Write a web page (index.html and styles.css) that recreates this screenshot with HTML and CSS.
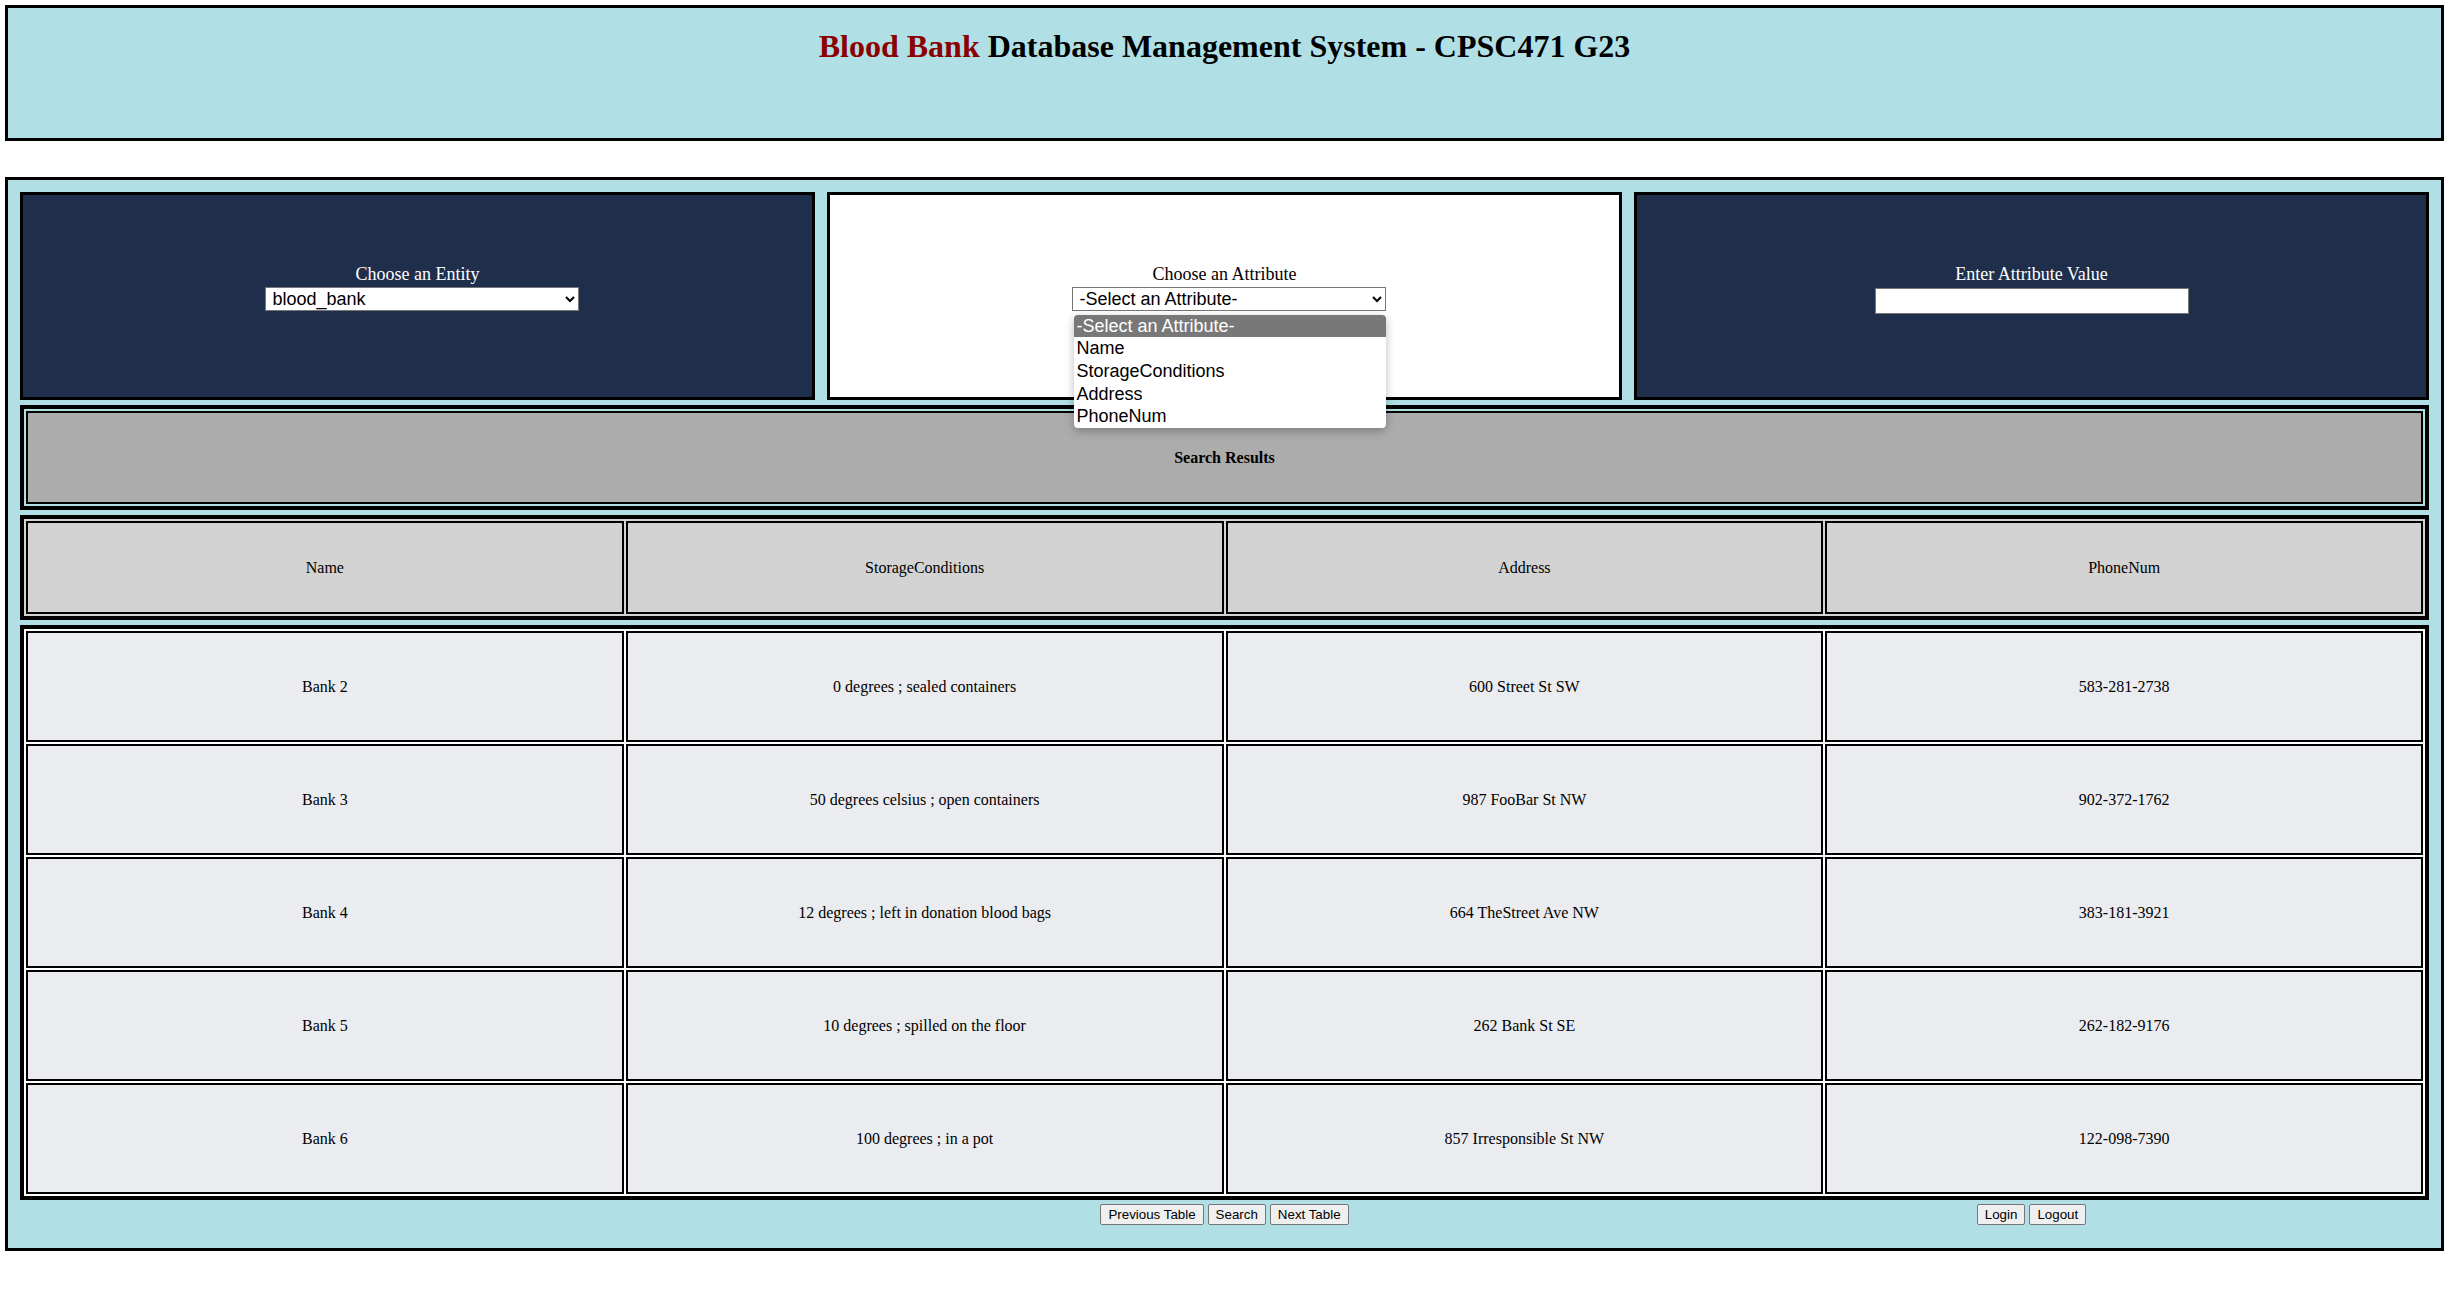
FILE: index.html
```html
<!DOCTYPE html>
<html lang="en">
<head>
<meta charset="utf-8">
<title>Blood Bank Database Management System</title>
<link rel="stylesheet" href="styles.css">
</head>
<body>
<header class="banner">
  <h1><span class="red">Blood Bank</span> Database Management System - CPSC471 G23</h1>
</header>

<main class="app">
  <div class="controls">
    <div class="panel dark">
      <label class="lbl" for="entity">Choose an Entity</label>
      <select id="entity" class="field sel"><option>blood_bank</option></select>
    </div>
    <div class="panel light">
      <label class="lbl" for="attr">Choose an Attribute</label>
      <div class="sel-wrap">
        <select id="attr" class="field sel">
          <option>-Select an Attribute-</option>
          <option>Name</option>
          <option>StorageConditions</option>
          <option>Address</option>
          <option>PhoneNum</option>
        </select>
        <ul class="dropdown">
          <li class="active">-Select an Attribute-</li>
          <li>Name</li>
          <li>StorageConditions</li>
          <li>Address</li>
          <li>PhoneNum</li>
        </ul>
      </div>
    </div>
    <div class="panel dark">
      <label class="lbl" for="val">Enter Attribute Value</label>
      <input id="val" type="text" class="field txt">
    </div>
  </div>

  <table class="tbl search">
    <tr><th><div class="c c-search">Search Results</div></th></tr>
  </table>

  <table class="tbl heads">
    <tr>
      <td><div class="c c-head">Name</div></td>
      <td><div class="c c-head">StorageConditions</div></td>
      <td><div class="c c-head">Address</div></td>
      <td><div class="c c-head">PhoneNum</div></td>
    </tr>
  </table>

  <table class="tbl rows">
    <tr>
      <td><div class="c c-row">Bank 2</div></td>
      <td><div class="c c-row">0 degrees ; sealed containers</div></td>
      <td><div class="c c-row">600 Street St SW</div></td>
      <td><div class="c c-row">583-281-2738</div></td>
    </tr>
    <tr>
      <td><div class="c c-row">Bank 3</div></td>
      <td><div class="c c-row">50 degrees celsius ; open containers</div></td>
      <td><div class="c c-row">987 FooBar St NW</div></td>
      <td><div class="c c-row">902-372-1762</div></td>
    </tr>
    <tr>
      <td><div class="c c-row">Bank 4</div></td>
      <td><div class="c c-row">12 degrees ; left in donation blood bags</div></td>
      <td><div class="c c-row">664 TheStreet Ave NW</div></td>
      <td><div class="c c-row">383-181-3921</div></td>
    </tr>
    <tr>
      <td><div class="c c-row">Bank 5</div></td>
      <td><div class="c c-row">10 degrees ; spilled on the floor</div></td>
      <td><div class="c c-row">262 Bank St SE</div></td>
      <td><div class="c c-row">262-182-9176</div></td>
    </tr>
    <tr>
      <td><div class="c c-row">Bank 6</div></td>
      <td><div class="c c-row">100 degrees ; in a pot</div></td>
      <td><div class="c c-row">857 Irresponsible St NW</div></td>
      <td><div class="c c-row">122-098-7390</div></td>
    </tr>
  </table>

  <div class="footer">
    <div></div>
    <div class="btns"><button type="button">Previous Table</button> <button type="button">Search</button> <button type="button">Next Table</button></div>
    <div class="btns"><button type="button">Login</button> <button type="button">Logout</button></div>
  </div>
</main>
</body>
</html>
```

FILE: styles.css
```css
html, body {
  background: #ffffff;
}
body {
  margin: 5px;
  font-family: "Liberation Serif", "Times New Roman", serif;
  font-size: 16px;
  color: #000;
}

.banner {
  background: #b0e0e6;
  border: 3px solid #000;
  height: 130px;
}
.banner h1 {
  margin: 19.5px 0;
  font-size: 32px;
  font-weight: bold;
  text-align: center;
  line-height: normal;
}
.red {
  color: #8b0000;
}

.app {
  display: block;
  margin-top: 36px;
  background: #b0e0e6;
  border: 3px solid #000;
  padding: 12px 12px 23px;
}

.controls {
  display: grid;
  grid-template-columns: repeat(3, 1fr);
  gap: 12px;
}
.panel {
  box-sizing: border-box;
  height: 208px;
  border: 3px solid #000;
  display: flex;
  flex-direction: column;
  align-items: center;
  justify-content: center;
  padding-bottom: 17px;
  text-align: center;
}
.panel.dark {
  background: #1e2e4b;
  color: #fff;
}
.panel.light {
  background: #fff;
  color: #000;
}
.lbl {
  display: block;
  font-size: 18px;
  line-height: 20.7px;
}
.field {
  box-sizing: border-box;
  width: 314px;
  margin-top: 2px;
  font-family: "Liberation Sans", Arial, sans-serif;
  font-size: 18px;
  color: #000;
  background: #fff;
  border: 1px solid #767676;
}
.sel {
  height: 24px;
  padding: 0 0 0 3px;
  border-radius: 0;
  margin-left: 8px;
}
.txt {
  height: 26px;
  padding: 1px 3px;
  margin-top: 3px;
  margin-bottom: -3px;
}

.sel-wrap {
  position: relative;
}
.dropdown {
  position: absolute;
  left: 10px;
  top: 30px;
  width: 312px;
  margin: 0;
  padding: 0;
  list-style: none;
  background: #fff;
  border-radius: 4px;
  overflow: hidden;
  box-shadow: 0 3px 10px rgba(0, 0, 0, 0.28);
  text-align: left;
  font-family: "Liberation Sans", Arial, sans-serif;
  font-size: 18px;
  z-index: 5;
}
.dropdown li {
  height: 22.6px;
  line-height: 22.6px;
  padding-left: 3px;
  color: #000;
  white-space: nowrap;
}
.dropdown li.active {
  background: #787878;
  color: #fff;
}

.tbl {
  width: 100%;
  table-layout: fixed;
  border-collapse: separate;
  border-spacing: 2px;
  border: 4px solid #000;
  margin-top: 5px;
}
.tbl td, .tbl th {
  padding: 0;
  border: 2px solid #000;
  text-align: center;
  vertical-align: middle;
}
.c {
  display: flex;
  align-items: center;
  justify-content: center;
}
.search {
  background: transparent;
}
.search th {
  background: #acacac;
}
.c-search {
  height: 89px;
  font-weight: bold;
}
.heads {
  background: #d3d3d3;
}
.heads td {
  background: #d3d3d3;
}
.c-head {
  height: 89px;
}
.rows {
  background: #fff;
}
.rows td {
  background: #ebecf0;
}
.c-row {
  height: 107px;
}

.footer {
  display: grid;
  grid-template-columns: repeat(3, 1fr);
  gap: 12px;
  margin-top: 4px;
}
.btns {
  text-align: center;
  font-size: 16px;
  line-height: 21px;
  height: 21px;
}
.btns button {
  font-family: "Liberation Sans", Arial, sans-serif;
  font-size: 13.333px;
  height: 21px;
  padding: 1px 7px;
  margin: 0;
  vertical-align: top;
  color: #000;
  background: #efefef;
  border: 1px solid #767676;
  border-radius: 2px;
}
```
